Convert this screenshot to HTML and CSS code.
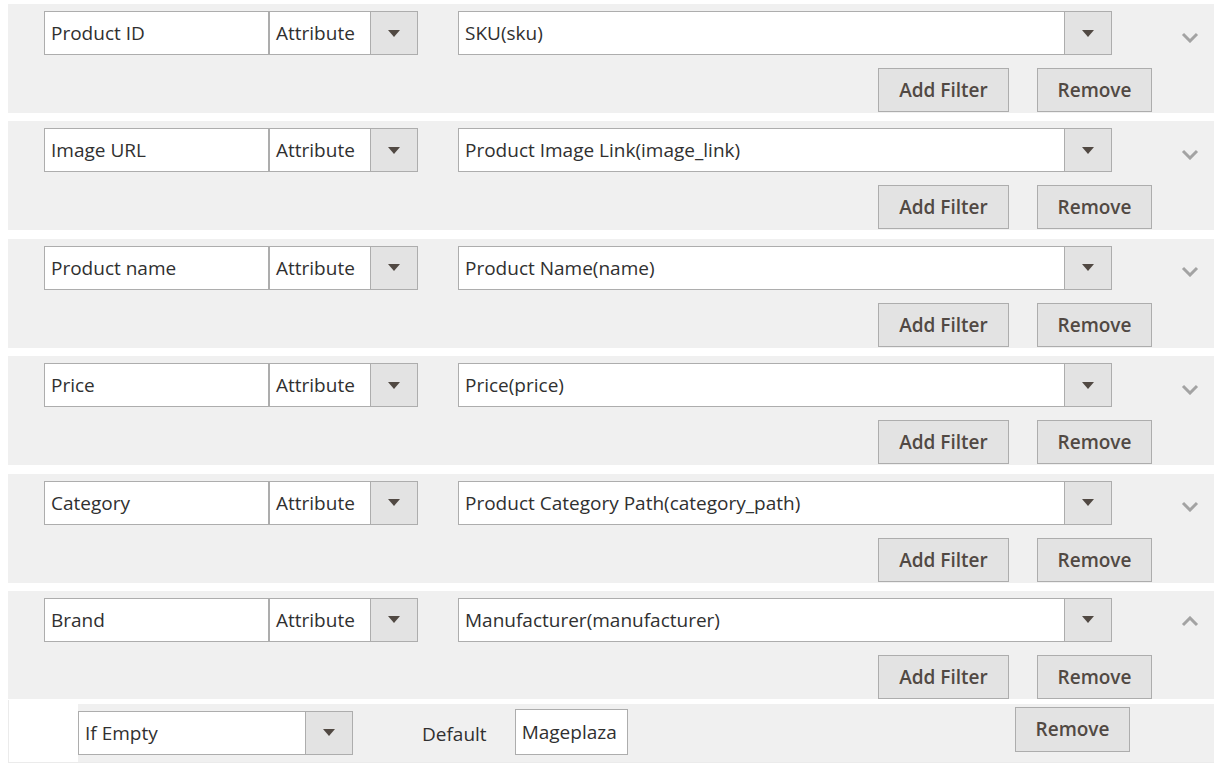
FILE: index.html
```html
<!DOCTYPE html>
<html>
<head>
<meta charset="utf-8">
<link rel="stylesheet" href="styles.css">
</head>
<body>
<div class="list">
  <div class="block">
    <div class="top">
      <div class="input name">Product ID</div>
      <div class="select attr"><span class="val">Attribute</span><span class="btn"><i class="tri"></i></span></div>
      <div class="select main"><span class="val">SKU(sku)</span><span class="btn"><i class="tri"></i></span></div>
      <svg class="chev" width="18" height="11" viewBox="0 0 18 11"><polyline points="2,2 9,9 16,2" fill="none" stroke="#a3a3a3" stroke-width="3"/></svg>
    </div>
    <div class="actions"><button class="b add">Add Filter</button><button class="b rm">Remove</button></div>
  </div>
  <div class="block">
    <div class="top">
      <div class="input name">Image URL</div>
      <div class="select attr"><span class="val">Attribute</span><span class="btn"><i class="tri"></i></span></div>
      <div class="select main"><span class="val">Product Image Link(image_link)</span><span class="btn"><i class="tri"></i></span></div>
      <svg class="chev" width="18" height="11" viewBox="0 0 18 11"><polyline points="2,2 9,9 16,2" fill="none" stroke="#a3a3a3" stroke-width="3"/></svg>
    </div>
    <div class="actions"><button class="b add">Add Filter</button><button class="b rm">Remove</button></div>
  </div>
  <div class="block">
    <div class="top">
      <div class="input name">Product name</div>
      <div class="select attr"><span class="val">Attribute</span><span class="btn"><i class="tri"></i></span></div>
      <div class="select main"><span class="val">Product Name(name)</span><span class="btn"><i class="tri"></i></span></div>
      <svg class="chev" width="18" height="11" viewBox="0 0 18 11"><polyline points="2,2 9,9 16,2" fill="none" stroke="#a3a3a3" stroke-width="3"/></svg>
    </div>
    <div class="actions"><button class="b add">Add Filter</button><button class="b rm">Remove</button></div>
  </div>
  <div class="block">
    <div class="top">
      <div class="input name">Price</div>
      <div class="select attr"><span class="val">Attribute</span><span class="btn"><i class="tri"></i></span></div>
      <div class="select main"><span class="val">Price(price)</span><span class="btn"><i class="tri"></i></span></div>
      <svg class="chev" width="18" height="11" viewBox="0 0 18 11"><polyline points="2,2 9,9 16,2" fill="none" stroke="#a3a3a3" stroke-width="3"/></svg>
    </div>
    <div class="actions"><button class="b add">Add Filter</button><button class="b rm">Remove</button></div>
  </div>
  <div class="block">
    <div class="top">
      <div class="input name">Category</div>
      <div class="select attr"><span class="val">Attribute</span><span class="btn"><i class="tri"></i></span></div>
      <div class="select main"><span class="val">Product Category Path(category_path)</span><span class="btn"><i class="tri"></i></span></div>
      <svg class="chev" width="18" height="11" viewBox="0 0 18 11"><polyline points="2,2 9,9 16,2" fill="none" stroke="#a3a3a3" stroke-width="3"/></svg>
    </div>
    <div class="actions"><button class="b add">Add Filter</button><button class="b rm">Remove</button></div>
  </div>
  <div class="block last">
    <div class="top">
      <div class="input name">Brand</div>
      <div class="select attr"><span class="val">Attribute</span><span class="btn"><i class="tri"></i></span></div>
      <div class="select main"><span class="val">Manufacturer(manufacturer)</span><span class="btn"><i class="tri"></i></span></div>
      <svg class="chev" width="18" height="11" viewBox="0 0 18 11"><polyline points="2,9 9,2 16,9" fill="none" stroke="#a3a3a3" stroke-width="3"/></svg>
    </div>
    <div class="actions"><button class="b add">Add Filter</button><button class="b rm">Remove</button></div>
  </div>
  <div class="sub">
    <div class="sub-blank"></div>
    <div class="sub-row">
      <div class="select cond"><span class="val">If Empty</span><span class="btn"><i class="tri"></i></span></div>
      <span class="lbl">Default</span>
      <div class="input def">Mageplaza</div>
      <button class="b rm sub-rm">Remove</button>
    </div>
  </div>
</div>
</body>
</html>
```
FILE: styles.css
```css
* { box-sizing: border-box; }
body {
  margin: 0;
  padding: 4px 0 0 8px;
  background: #fff;
  font-family: "Open Sans", "Liberation Sans", sans-serif;
  font-size: 19px;
  color: #303030;
}
.list { width: 1206px; }
.block {
  background: #f0f0f0;
  height: 109px;
  margin-bottom: 8.4px;
  display: flex;
  flex-direction: column;
}
.block.last { height: 108px; margin-bottom: 1px; }
.top {
  display: flex;
  align-items: center;
  padding-left: 36px;
  margin-top: 7px;
  height: 44px;
}
.input {
  height: 44px;
  border: 1px solid #adadad;
  background: #fff;
  display: flex;
  align-items: center;
  padding-left: 6px;
  white-space: nowrap;
}
.name { width: 225px; }
.select {
  height: 44px;
  border: 1px solid #adadad;
  background: #fff;
  display: flex;
  align-items: stretch;
}
.select .val {
  flex: 1;
  display: flex;
  align-items: center;
  padding-left: 6px;
  white-space: nowrap;
}
.select .btn {
  width: 47px;
  border-left: 1px solid #adadad;
  background: #e3e3e3;
  display: flex;
  align-items: center;
  justify-content: center;
}
.tri {
  width: 0;
  height: 0;
  border-left: 6.5px solid transparent;
  border-right: 6.5px solid transparent;
  border-top: 7px solid #514943;
}
.attr { width: 149px; }
.main { width: 654px; margin-left: 40px; }
.chev { margin-left: 69px; margin-top: 8px; }
.last .chev { margin-top: 4px; }
.actions {
  display: flex;
  justify-content: flex-end;
  gap: 28px;
  padding-right: 62px;
  margin-top: 13px;
}
.b {
  height: 44px;
  border: 1px solid #adadad;
  background: #e3e3e3;
  color: #514943;
  font-family: "Open Sans", "Liberation Sans", sans-serif;
  font-size: 19px;
  font-weight: 600;
  padding: 0;
}
.add { width: 131px; }
.rm { width: 115px; }
.sub {
  display: flex;
  height: 63px;
  border-left: 1px solid #ebebeb;
  border-bottom: 1px solid #ebebeb;
}
.sub-blank { width: 69px; }
.sub-row {
  flex: 1;
  margin-top: 4px;
  background: #f0f0f0;
  display: flex;
  align-items: flex-start;
  height: 58px;
}
.cond { width: 275px; margin-top: 7px; }
.lbl { margin-left: 69px; margin-top: 17px; }
.def { width: 113px; height: 46px; margin-left: 28px; margin-top: 5px; }
.sub-rm { margin-left: auto; margin-right: 84px; margin-top: 3px; height: 45px; }
```
